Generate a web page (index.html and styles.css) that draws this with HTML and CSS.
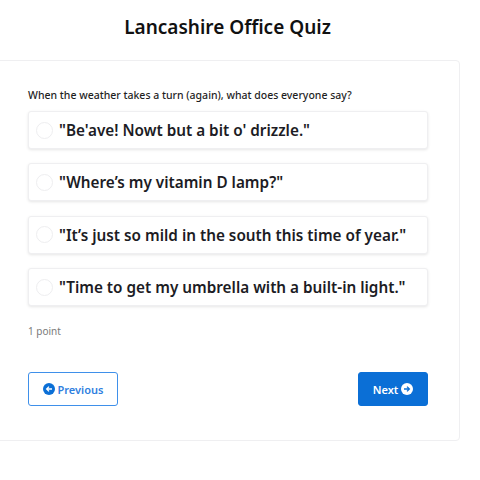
FILE: index.html
```html
<!DOCTYPE html>
<html lang="en">
<head>
<meta charset="utf-8">
<title>Lancashire Office Quiz</title>
<link rel="stylesheet" href="styles.css">
</head>
<body>
<h1 class="title">Lancashire Office Quiz</h1>
<main class="card">
  <p class="question">When the weather takes a turn (again), what does everyone say?</p>
  <div class="options">
    <label class="option"><span class="radio"></span><span class="option-text">"Be'ave! Nowt but a bit o' drizzle."</span></label>
    <label class="option"><span class="radio"></span><span class="option-text">"Where’s my vitamin D lamp?"</span></label>
    <label class="option"><span class="radio"></span><span class="option-text">"It’s just so mild in the south this time of year."</span></label>
    <label class="option"><span class="radio"></span><span class="option-text">"Time to get my umbrella with a built-in light."</span></label>
  </div>
  <p class="points">1 point</p>
  <div class="actions">
    <button class="btn btn-outline" type="button">
      <svg class="icon" viewBox="0 0 16 16" aria-hidden="true"><circle cx="8" cy="8" r="8" fill="#0b6fd6"/><path d="M12 8H5M8 4.8 4.8 8 8 11.2" fill="none" stroke="#fff" stroke-width="1.7"/></svg>
      Previous
    </button>
    <button class="btn btn-solid" type="button">
      Next
      <svg class="icon" viewBox="0 0 16 16" aria-hidden="true"><circle cx="8" cy="8" r="8" fill="#fff"/><path d="M4 8h7M8 4.8 11.2 8 8 11.2" fill="none" stroke="#0b6fd6" stroke-width="1.7"/></svg>
    </button>
  </div>
</main>
</body>
</html>
```
FILE: styles.css
```css
* { box-sizing: border-box; }
html, body { margin: 0; height: 480px; overflow: hidden; background: #fff; }
body { font-family: "Noto Sans", "Open Sans", sans-serif; color: #1a1a1a; }
.title {
  margin: 0;
  height: 60px;
  padding-top: 13px;
  padding-right: 25px;
  font-size: 19px;
  line-height: 28px;
  font-weight: 600;
  text-align: center;
  color: #111;
}
.card {
  width: 480px;
  height: 381px;
  margin-left: -20px;
  padding: 26px 31px 0 47px;
  background: #fff;
  border: 1px solid #efeff1;
  border-radius: 4px;
}
.question {
  margin: 0 0 7px;
  font-size: 10.5px;
  line-height: 17px;
  font-weight: 500;
  color: #1f1f1f;
}
.options { display: flex; flex-direction: column; gap: 14.4px; }
.option {
  display: flex;
  align-items: center;
  gap: 6px;
  height: 38px;
  padding-left: 7px;
  background: #fff;
  border: 1px solid #efeff1;
  border-radius: 3px;
  box-shadow: 0 1px 3px rgba(0,0,0,.1);
}
.radio {
  width: 17px;
  height: 17px;
  flex: none;
  border: 1.5px solid #eeeef0;
  border-radius: 50%;
}
.option-text { font-size: 15.3px; line-height: 20px; font-weight: 600; color: #1c1c24; white-space: nowrap; }
.points { margin: 18px 0 0; font-size: 10px; line-height: 14px; color: #7a7a7a; }
.actions { display: flex; justify-content: space-between; margin-top: 34px; }
.btn {
  display: flex;
  align-items: center;
  justify-content: center;
  gap: 3px;
  height: 34px;
  padding: 0;
  font-family: inherit;
  font-size: 11px;
  font-weight: 600;
  border-radius: 3px;
}
.btn-outline { width: 90px; color: #2f80e0; background: #fff; border: 1px solid #3f90ea; }
.btn-solid { width: 70px; color: #fff; background: #0b6fd6; border: 1px solid #0b6fd6; }
.icon { width: 12px; height: 12px; flex: none; }
```
